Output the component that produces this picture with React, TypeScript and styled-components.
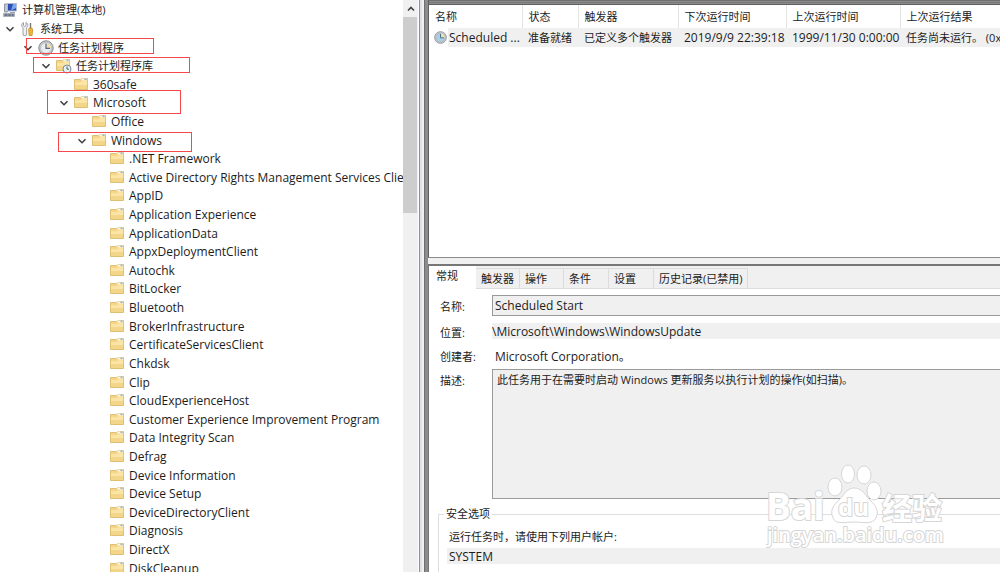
import React from "react";
import styled, { createGlobalStyle } from "styled-components";

const Global = createGlobalStyle`
  * { box-sizing: border-box; }
  html, body { margin: 0; height: 100%; overflow: hidden; background: #f0f0f0; }
  #root { height: 100%; }
  body, button, input, textarea {
    font-family: "Open Sans", "Noto Sans CJK SC", sans-serif;
    font-size: 11px;
    color: #1c1c1c;
  }
`;

const Shell = styled.div`
  display: flex;
  height: 100vh;
  overflow: hidden;
`;

const TreePane = styled.nav`
  position: relative;
  flex: 0 0 42%;
  display: flex;
  overflow: hidden;
  background: #fff;
  border-right: 1px solid #8b8f98;
`;

const TreeViewport = styled.div`
  flex: 1;
  min-width: 0;
  overflow: hidden;
`;

const TreeList = styled.ul`
  display: grid;
  grid-auto-rows: 1fr;
  height: calc(100vh + 6px);
  margin: 0;
  padding: 1px 0 0;
  list-style: none;
`;

const TreeRow = styled.li<{ $depth: number }>`
  display: flex;
  align-items: center;
  min-height: 0;
  padding-left: ${(p) => 2 + p.$depth * 18}px;
  white-space: nowrap;
  line-height: 18px;
  font-size: 12px;
`;

const TreeLabel = styled.span<{ $cjk: boolean }>`
  margin-left: ${(p) => (p.$cjk ? 4 : 3)}px;
  font-size: ${(p) => (p.$cjk ? 11 : 12)}px;
`;

const Expander = styled.button`
  flex: none;
  display: flex;
  align-items: center;
  justify-content: center;
  width: 16px;
  height: 16px;
  margin-left: -18px;
  margin-right: 2px;
  padding: 0;
  border: 0;
  background: none;
`;

const Icon = styled.svg`
  flex: none;
  display: block;
`;

const Highlight = styled.div<{ $x: number; $y: number; $w: number; $h: number }>`
  position: absolute;
  left: ${(p) => p.$x}px;
  top: ${(p) => p.$y}px;
  width: ${(p) => p.$w}px;
  height: ${(p) => p.$h}px;
  border: 1px solid #f5484c;
  pointer-events: none;
`;

const ScrollTrack = styled.div`
  flex: none;
  display: flex;
  flex-direction: column;
  width: 15px;
  margin-right: 1px;
  background: #f0f0f0;
`;

const ScrollUp = styled.button`
  display: flex;
  align-items: center;
  justify-content: center;
  height: 17px;
  padding: 0;
  border: 0;
  background: none;
`;

const ScrollThumb = styled.div`
  width: 14px;
  height: 196px;
  background: #cdcdcd;
`;

const Gutter = styled.div`
  flex: none;
  width: 4px;
  background: linear-gradient(to right, #dfe0ea 2px, #f0f0f0 2px);
`;

const Main = styled.main`
  flex: 1;
  min-width: 0;
  display: flex;
  flex-direction: column;
  padding-left: 4px;
  background: linear-gradient(to right, #6e6e6e 1px, #8c8c8c 1px 4px, #f0f0f0 4px);
`;

const ListPane = styled.section`
  flex: 0 0 258px;
  padding-top: 5px;
  border-bottom: 1px solid #8a8a8a;
  border-left: 1px solid #5e5e5e;
  background: linear-gradient(
    to bottom,
    #6e6e6e 1px,
    #8c8c8c 1px 2px,
    #777 2px 3px,
    #8c8c8c 3px 4px,
    #5e5e5e 4px 5px,
    #fff 5px
  );
  overflow: hidden;
`;

const TaskTable = styled.table`
  width: 640px;
  border-collapse: collapse;
  table-layout: fixed;
  white-space: nowrap;
`;

const HeadCell = styled.th<{ $w: number }>`
  width: ${(p) => p.$w}px;
  height: 23px;
  padding: 0 0 0 6px;
  border-right: 1px solid #e3e3e3;
  font-weight: 400;
  text-align: left;
  line-height: 18px;
`;

const Cell = styled.td<{ $first?: boolean; $date?: boolean }>`
  height: 19px;
  padding: 0 0 0 ${(p) => (p.$first ? 5 : 6)}px;
  background: ${(p) =>
    p.$first ? "linear-gradient(to right, #fff 19px, #f0f0f0 19px)" : "#f0f0f0"};
  font-size: ${(p) => (p.$date ? 12 : 11)}px;
  line-height: 18px;
`;

const TaskName = styled.span`
  display: flex;
  align-items: center;
  gap: 2px;
  font-size: 12px;
`;

const DetailPane = styled.section`
  flex: 1;
  min-height: 0;
  margin-top: 6px;
  border-top: 2px solid #777;
  border-left: 1px solid #777;
  background: #fff;
  box-shadow: 0 -6px #f0f0f0;
  overflow: hidden;
`;

const Tabs = styled.div`
  display: flex;
  align-items: flex-end;
  height: 23px;
  background: #f0f0f0;
  box-shadow: inset 0 -1px #dcdcdc;
`;

const Tab = styled.button<{ $w: number; $active?: boolean }>`
  flex: none;
  width: ${(p) => p.$w}px;
  height: ${(p) => (p.$active ? 23 : 21)}px;
  padding: ${(p) => (p.$active ? "0 0 3px 7px" : "0 0 0 5px")};
  border: solid #dcdcdc;
  border-width: ${(p) => (p.$active ? "0" : "1px 1px 1px 0")};
  background: ${(p) => (p.$active ? "#fff" : "#f0f0f0")};
  text-align: left;
  white-space: nowrap;
  line-height: 18px;
`;

const Form = styled.div`
  display: grid;
  grid-template-columns: 52px 1fr;
  row-gap: 3px;
  padding: 6px 0 0 11px;
`;

const Label = styled.label`
  padding-top: 3px;
  line-height: 18px;
`;

const NameInput = styled.input`
  width: 100%;
  height: 21px;
  padding: 0 2px;
  border: 1px solid #9a9a9a;
  border-right: 0;
  background: #f0f0f0;
  font-size: 12px;
  outline: 0;
`;

const Location = styled.input`
  width: 100%;
  height: 16px;
  margin-top: 4px;
  padding: 0;
  border: 0;
  background: #f0f0f0;
  font-size: 12px;
  outline: 0;
`;

const LocationLabel = styled(Label)`
  padding-top: 5px;
`;

const Author = styled.output`
  padding: 3px 0 0 3px;
  font-size: 12px;
  line-height: 18px;
`;

const Description = styled.textarea`
  display: block;
  width: 100%;
  height: 130px;
  padding: 1px 4px;
  border: 1px solid #9a9a9a;
  border-right: 0;
  background: #f0f0f0;
  line-height: 18px;
  resize: none;
  outline: 0;
`;

const Security = styled.fieldset`
  min-width: 0;
  height: 80px;
  margin: 6px 0 0 9px;
  padding: 5px 0 0 8px;
  border: 1px solid #dedede;
  border-right: 0;
`;

const Legend = styled.legend`
  margin-left: -3px;
  padding: 0 2px;
  line-height: 18px;
`;

const AccountLabel = styled.label`
  display: block;
  padding-left: 2px;
  line-height: 18px;
`;

const Account = styled.input`
  display: block;
  width: 100%;
  height: 16px;
  margin-top: 2px;
  padding: 0 2px;
  border: 0;
  background: #f0f0f0;
  font-size: 12px;
  outline: 0;
`;

const Watermark = styled.svg`
  position: absolute;
  right: 50px;
  bottom: 16px;
  pointer-events: none;
`;

const Chevron = ({ up }: { up?: boolean }) => (
  <Icon width="10" height="10" viewBox="0 0 10 10" fill="none" stroke="#404040" strokeWidth="1.6">
    <path d={up ? "M2 6.5 5 3.5 8 6.5" : "M1.5 3.2 5 6.7 8.5 3.2"} />
  </Icon>
);

const Folder = ({ clock }: { clock?: boolean }) => (
  <Icon width="16" height="16" viewBox="0 0 16 16">
    <path d="M.5 2.500h5.500l1.500 1V1.500h6v11H.5z" fill="#f4d68a" stroke="#dfbf71" />
    <path d="M7.500 1.500h5.500v2H7z" fill="#fdf6de" />
    <path d="M10.500 1.600h2v1.200h-2z" fill="#6ba7c9" />
    <path d="M1 5.200h6l1-1h5.200V8H1z" fill="#fbe5a6" />
    {clock && (
      <>
        <circle cx="11" cy="11" r="4" fill="#e8f0f4" stroke="#7d8994" />
        <path d="M11 8.500v2.700h2" fill="none" stroke="#45617a" />
      </>
    )}
  </Icon>
);

const Clock = ({ size = 16, tint = "#e9edf0" }: { size?: number; tint?: string }) => (
  <Icon width={size} height={size} viewBox="0 0 16 16">
    <circle cx="8" cy="8" r="7.2" fill="#c9ccd0" stroke="#85898f" />
    <circle cx="8" cy="8" r="5.4" fill={tint} stroke="#a5abb1" strokeWidth=".6" />
    <path d="M8 8V2.8A5.2 5.2 0 0 1 13.2 8z" fill="#f1dfae" />
    <path d="M8 3.5V8.4h4" fill="none" stroke="#4d6c88" strokeWidth="1.2" />
  </Icon>
);

const Computer = () => (
  <Icon width="16" height="16" viewBox="0 0 16 16">
    <path d="M2.500 2h3v8h-3z" fill="#c6cbd3" stroke="#8b93a0" />
    <path d="M5.500 1.500h9v7.500h-9z" fill="#2c50b8" stroke="#b5bccb" />
    <path d="M9 8.500 11 2h3v4z" fill="#7ea6ea" />
    <path d="M8 10h5v1H8z" fill="#9aa2ae" />
    <path d="M1.500 11.500h11v3h-11z" fill="#8a93a2" stroke="#a9b0bb" />
    <path d="M3 13h2m1.500 0h2m1.500 0h1.500" stroke="#4d596c" />
  </Icon>
);

const Tools = () => (
  <Icon width="16" height="16" viewBox="0 0 16 16">
    <path d="M3.500 1.500v3l1.200 1 1.300-1v-3c2.500 1.200 2.200 4 .6 5V14q-2 1.500-3.600 0V6.500C1.200 5.500 1.200 2.700 3.500 1.500z" fill="#eef0f2" stroke="#858b92" strokeWidth=".8" />
    <path d="M10.500 2v5" stroke="#777" strokeWidth="1.400" />
    <path d="M9.200 7h2.800l.6 2-.5 5.500H9.100L8.600 9z" fill="#f0b630" stroke="#bb8320" strokeWidth=".7" />
  </Icon>
);

type Kind = "folder" | "computer" | "tools" | "clock" | "library";
type Node = { name: string; depth: number; kind?: Kind; open?: boolean };

const leaves = [
  ".NET Framework",
  "Active Directory Rights Management Services Client",
  "AppID",
  "Application Experience",
  "ApplicationData",
  "AppxDeploymentClient",
  "Autochk",
  "BitLocker",
  "Bluetooth",
  "BrokerInfrastructure",
  "CertificateServicesClient",
  "Chkdsk",
  "Clip",
  "CloudExperienceHost",
  "Customer Experience Improvement Program",
  "Data Integrity Scan",
  "Defrag",
  "Device Information",
  "Device Setup",
  "DeviceDirectoryClient",
  "Diagnosis",
  "DirectX",
  "DiskCleanup",
];

const nodes: Node[] = [
  { name: "计算机管理(本地)", depth: 0, kind: "computer" },
  { name: "系统工具", depth: 1, kind: "tools", open: true },
  { name: "任务计划程序", depth: 2, kind: "clock", open: true },
  { name: "任务计划程序库", depth: 3, kind: "library", open: true },
  { name: "360safe", depth: 4 },
  { name: "Microsoft", depth: 4, open: true },
  { name: "Office", depth: 5 },
  { name: "Windows", depth: 5, open: true },
  ...leaves.map((name) => ({ name, depth: 6 })),
];

const NodeIcon = ({ kind }: { kind?: Kind }) => {
  if (kind === "computer") return <Computer />;
  if (kind === "tools") return <Tools />;
  if (kind === "clock") return <Clock />;
  return <Folder clock={kind === "library"} />;
};

const columns = [
  { title: "名称", width: 93 },
  { title: "状态", width: 56 },
  { title: "触发器", width: 100 },
  { title: "下次运行时间", width: 108 },
  { title: "上次运行时间", width: 114 },
  { title: "上次运行结果", width: 169 },
];

const tabs = [
  { title: "常规", width: 47 },
  { title: "触发器", width: 44 },
  { title: "操作", width: 44 },
  { title: "条件", width: 45 },
  { title: "设置", width: 45 },
  { title: "历史记录(已禁用)", width: 94 },
];

const PawMark = () => (
  <Watermark width="184" height="94" viewBox="0 0 184 94" fill="#fff" stroke="#d6d6d6" strokeWidth="1">
    <ellipse cx="82" cy="12" rx="6.500" ry="9" />
    <ellipse cx="98" cy="13" rx="7" ry="9" />
    <ellipse cx="69" cy="25" rx="7" ry="9" />
    <ellipse cx="108" cy="29" rx="7" ry="9" />
    <path d="M88 26c7 0 10 5 14 10 6 6 12 11 8 20-4 7-13 4-22 4s-18 3-21-4c-4-9 2-14 8-20 4-5 7-10 13-10z" />
    <g fontFamily="Open Sans, sans-serif" fontWeight="700" strokeWidth="2" paintOrder="stroke">
      <text x="0" y="58" fontSize="37">Bai</text>
      <text x="72" y="54" fontSize="24">du</text>
      <text x="116" y="57" fontSize="30" fontFamily="Noto Sans CJK SC, sans-serif">经验</text>
    </g>
    <text x="1" y="80" fontSize="20" fontFamily="Open Sans, sans-serif" fontWeight="600" strokeWidth="2" paintOrder="stroke">jingyan.baidu.com</text>
  </Watermark>
);

export default function App() {
  return (
    <Shell>
      <Global />
      <TreePane aria-label="计算机管理">
        <TreeViewport>
          <TreeList>
            {nodes.map((n) => (
              <TreeRow key={n.name} $depth={n.depth}>
                {n.open && (
                  <Expander aria-label={n.name} aria-expanded>
                    <Chevron />
                  </Expander>
                )}
                <NodeIcon kind={n.kind} />
                <TreeLabel $cjk={n.name.charCodeAt(0) > 255}>{n.name}</TreeLabel>
              </TreeRow>
            ))}
          </TreeList>
        </TreeViewport>
        <ScrollTrack>
          <ScrollUp aria-label="向上滚动">
            <Chevron up />
          </ScrollUp>
          <ScrollThumb />
        </ScrollTrack>
        <Highlight $x={26} $y={38} $w={128} $h={16} />
        <Highlight $x={33} $y={57} $w={157} $h={16} />
        <Highlight $x={47} $y={90} $w={134} $h={24} />
        <Highlight $x={58} $y={132} $w={134} $h={20} />
      </TreePane>
      <Gutter />
      <Main>
        <ListPane>
          <TaskTable>
            <thead>
              <tr>
                {columns.map((c) => (
                  <HeadCell key={c.title} $w={c.width}>{c.title}</HeadCell>
                ))}
              </tr>
            </thead>
            <tbody>
              <tr>
                <Cell $first>
                  <TaskName>
                    <Clock size={13} tint="#a9cfe4" />
                    Scheduled ...
                  </TaskName>
                </Cell>
                <Cell>准备就绪</Cell>
                <Cell>已定义多个触发器</Cell>
                <Cell $date>2019/9/9 22:39:18</Cell>
                <Cell $date>1999/11/30 0:00:00</Cell>
                <Cell>任务尚未运行。 (0x41303)</Cell>
              </tr>
            </tbody>
          </TaskTable>
        </ListPane>
        <DetailPane>
          <Tabs role="tablist">
            {tabs.map((t, i) => (
              <Tab key={t.title} role="tab" aria-selected={i === 0} $w={t.width} $active={i === 0}>
                {t.title}
              </Tab>
            ))}
          </Tabs>
          <Form>
            <Label htmlFor="name">名称:</Label>
            <NameInput id="name" readOnly value="Scheduled Start" />
            <LocationLabel htmlFor="location">位置:</LocationLabel>
            <Location id="location" readOnly value="\Microsoft\Windows\WindowsUpdate" />
            <Label htmlFor="author">创建者:</Label>
            <Author id="author">Microsoft Corporation。</Author>
            <Label htmlFor="description">描述:</Label>
            <Description
              id="description"
              readOnly
              value="此任务用于在需要时启动 Windows 更新服务以执行计划的操作(如扫描)。"
            />
          </Form>
          <Security>
            <Legend>安全选项</Legend>
            <AccountLabel htmlFor="account">运行任务时，请使用下列用户帐户:</AccountLabel>
            <Account id="account" readOnly value="SYSTEM" />
          </Security>
        </DetailPane>
      </Main>
      <PawMark />
    </Shell>
  );
}
